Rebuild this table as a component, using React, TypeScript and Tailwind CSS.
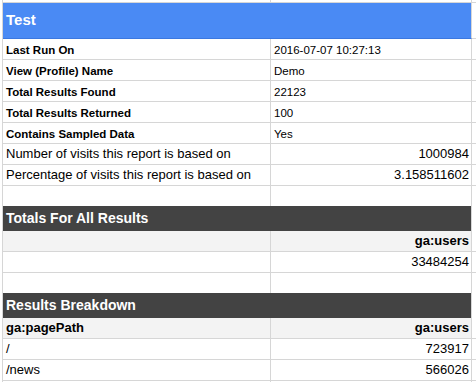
import React from "react";

const G = "border-[#d6d6d6]";

type CellProps = { children?: React.ReactNode; right?: boolean; bold?: boolean; big?: boolean; gray?: boolean };

function Cell({ children, right, bold, big, gray, w }: CellProps & { w: string }) {
  return (
    <div
      className={`${w} shrink-0 h-full border-r ${G} flex items-end overflow-hidden whitespace-nowrap leading-[16px] text-black ${
        big ? "text-[13px] pb-[2px]" : "text-[11.5px] pb-[1px]"
      } ${right ? "justify-end pr-[2px]" : "pl-[3px]"} ${bold ? "font-bold" : ""} ${gray ? "bg-[#f3f3f3]" : "bg-white"}`}
    >
      {children}
    </div>
  );
}

function Row({
  a,
  b,
  aProps = {},
  bProps = {},
  noBorder,
}: {
  a?: React.ReactNode;
  b?: React.ReactNode;
  aProps?: CellProps;
  bProps?: CellProps;
  noBorder?: boolean;
}) {
  return (
    <div className={`flex ${noBorder ? "h-[20px]" : `h-[21px] border-b ${G}`}`}>
      <Cell w="w-[268px]" {...aProps}>
        {a}
      </Cell>
      <Cell w="w-[201px]" {...bProps}>
        {b}
      </Cell>
      <div className="flex-1" />
    </div>
  );
}

function Band({ title, blue }: { title: string; blue?: boolean }) {
  return (
    <div className={`flex ${blue ? "h-[36px]" : "h-[25px]"}`}>
      <div
        className={`w-[469px] shrink-0 h-full flex items-center pl-[3px] font-bold text-white border-r ${G} ${
          blue ? "bg-[#4a8af4] text-[15px] border-b border-b-[#3b78e0]" : "bg-[#434343] text-[14px]"
        }`}
      >
        {title}
      </div>
      <div className={`flex-1 ${blue ? `border-b ${G}` : ""}`} />
    </div>
  );
}

export default function App() {
  const meta: [string, string][] = [
    ["Last Run On", "2016-07-07 10:27:13"],
    ["View (Profile) Name", "Demo"],
    ["Total Results Found", "22123"],
    ["Total Results Returned", "100"],
    ["Contains Sampled Data", "Yes"],
  ];
  return (
    <div
      className="w-[476px] h-[382px] overflow-hidden bg-white pl-[2px]"
      style={{ fontFamily: '"Liberation Sans", Arial, sans-serif' }}
    >
      <div className={`border-l ${G} h-full`}>
        {/* partial row above the sheet header */}
        <div className={`flex h-[3px] border-b ${G}`}>
          <div className={`w-[268px] shrink-0 h-full border-r ${G}`} />
          <div className={`w-[201px] shrink-0 h-full border-r ${G}`} />
        </div>

        <Band title="Test" blue />

        {meta.map(([k, v]) => (
          <Row key={k} a={k} b={v} aProps={{ bold: true }} />
        ))}
        <Row
          a="Number of visits this report is based on"
          b="1000984"
          aProps={{ big: true }}
          bProps={{ big: true, right: true }}
        />
        <Row
          a="Percentage of visits this report is based on"
          b="3.158511602"
          aProps={{ big: true }}
          bProps={{ big: true, right: true }}
        />
        <Row noBorder />

        <Band title="Totals For All Results" />
        <Row b="ga:users" aProps={{ gray: true }} bProps={{ gray: true, big: true, bold: true, right: true }} />
        <Row b="33484254" bProps={{ big: true, right: true }} />
        <Row noBorder />

        <Band title="Results Breakdown" />
        <Row
          a="ga:pagePath"
          b="ga:users"
          aProps={{ gray: true, big: true, bold: true }}
          bProps={{ gray: true, big: true, bold: true, right: true }}
        />
        <Row a="/" b="723917" aProps={{ big: true }} bProps={{ big: true, right: true }} />
        <Row a="/news" b="566026" aProps={{ big: true }} bProps={{ big: true, right: true }} />
        <Row />
      </div>
    </div>
  );
}
